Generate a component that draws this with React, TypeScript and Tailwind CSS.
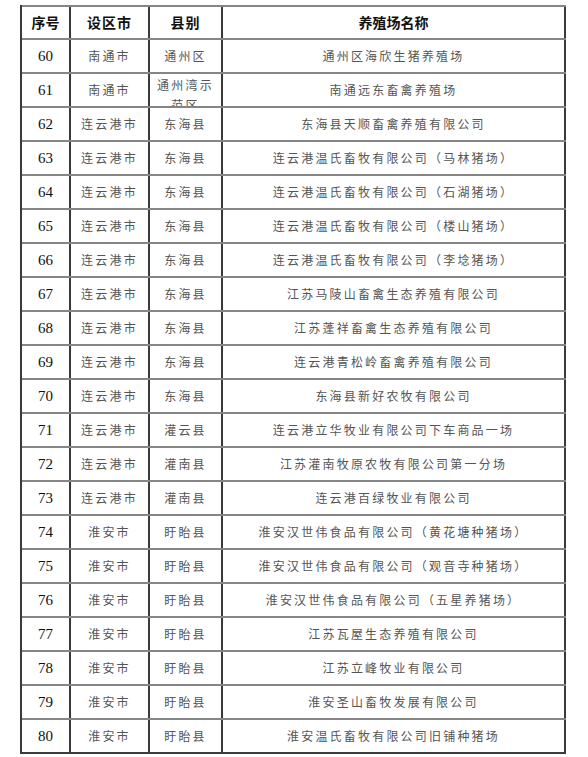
const rows: [number, string, string, string][] = [
  [60, '南通市', '通州区', '通州区海欣生猪养殖场'],
  [61, '南通市', '通州湾示范区', '南通远东畜禽养殖场'],
  [62, '连云港市', '东海县', '东海县天顺畜禽养殖有限公司'],
  [63, '连云港市', '东海县', '连云港温氏畜牧有限公司（马林猪场）'],
  [64, '连云港市', '东海县', '连云港温氏畜牧有限公司（石湖猪场）'],
  [65, '连云港市', '东海县', '连云港温氏畜牧有限公司（楼山猪场）'],
  [66, '连云港市', '东海县', '连云港温氏畜牧有限公司（李埝猪场）'],
  [67, '连云港市', '东海县', '江苏马陵山畜禽生态养殖有限公司'],
  [68, '连云港市', '东海县', '江苏蓬祥畜禽生态养殖有限公司'],
  [69, '连云港市', '东海县', '连云港青松岭畜禽养殖有限公司'],
  [70, '连云港市', '东海县', '东海县新好农牧有限公司'],
  [71, '连云港市', '灌云县', '连云港立华牧业有限公司下车商品一场'],
  [72, '连云港市', '灌南县', '江苏灌南牧原农牧有限公司第一分场'],
  [73, '连云港市', '灌南县', '连云港百绿牧业有限公司'],
  [74, '淮安市', '盱眙县', '淮安汉世伟食品有限公司（黄花塘种猪场）'],
  [75, '淮安市', '盱眙县', '淮安汉世伟食品有限公司（观音寺种猪场）'],
  [76, '淮安市', '盱眙县', '淮安汉世伟食品有限公司（五星养猪场）'],
  [77, '淮安市', '盱眙县', '江苏瓦屋生态养殖有限公司'],
  [78, '淮安市', '盱眙县', '江苏立峰牧业有限公司'],
  [79, '淮安市', '盱眙县', '淮安圣山畜牧发展有限公司'],
  [80, '淮安市', '盱眙县', '淮安温氏畜牧有限公司旧铺种猪场'],
];

const cjk = "font-['Noto_Sans_CJK_SC',sans-serif]";
const cell = 'flex items-center justify-center border-r-2 border-[#3a3a3a] overflow-hidden';

export default function App() {
  return (
    <div className="bg-white w-[588px] h-[757px] pt-[5px] pl-[20px]">
      <div className="w-[546px] border-l-2 border-[#3a3a3a]">
        {/* header */}
        <div className="flex h-[35px] border-y-2 border-[#858585]">
          {['序号', '设区市', '县别', '养殖场名称'].map((h, i) => (
            <div
              key={h}
              className={`${cell} ${cjk} text-[14px] font-bold text-[#111] ${
                i === 0 ? 'w-[49px]' : i === 1 ? 'w-[79px]' : i === 2 ? 'w-[73px]' : 'flex-1'
              } ${i === 1 || i === 2 ? 'tracking-[1px]' : ''}`}
            >
              {h}
            </div>
          ))}
        </div>

        {rows.map(([no, city, county, name], idx) => (
          <div
            key={no}
            className={`flex h-[34px] border-b-2 ${idx === rows.length - 1 ? 'border-[#3a3a3a]' : 'border-[#858585]'}`}
          >
            <div className={`${cell} w-[49px] font-['Liberation_Serif',serif] text-[15px] text-[#111]`}>{no}</div>
            <div className={`${cell} w-[79px] ${cjk} text-[12px] tracking-[2.2px] text-[#555]`}>{city}</div>
            {county.length > 4 ? (
              <div className={`border-r-2 border-[#3a3a3a] overflow-hidden w-[73px] ${cjk} text-[12px] tracking-[2.2px] text-[#555] text-center leading-[20px] pt-[1px] px-[6px]`}>
                {county}
              </div>
            ) : (
              <div className={`${cell} w-[73px] ${cjk} text-[12px] tracking-[2.2px] text-[#555]`}>{county}</div>
            )}
            <div className={`${cell} flex-1 ${cjk} text-[12px] tracking-[2.2px] text-[#555]`}>{name}</div>
          </div>
        ))}
      </div>
    </div>
  );
}
